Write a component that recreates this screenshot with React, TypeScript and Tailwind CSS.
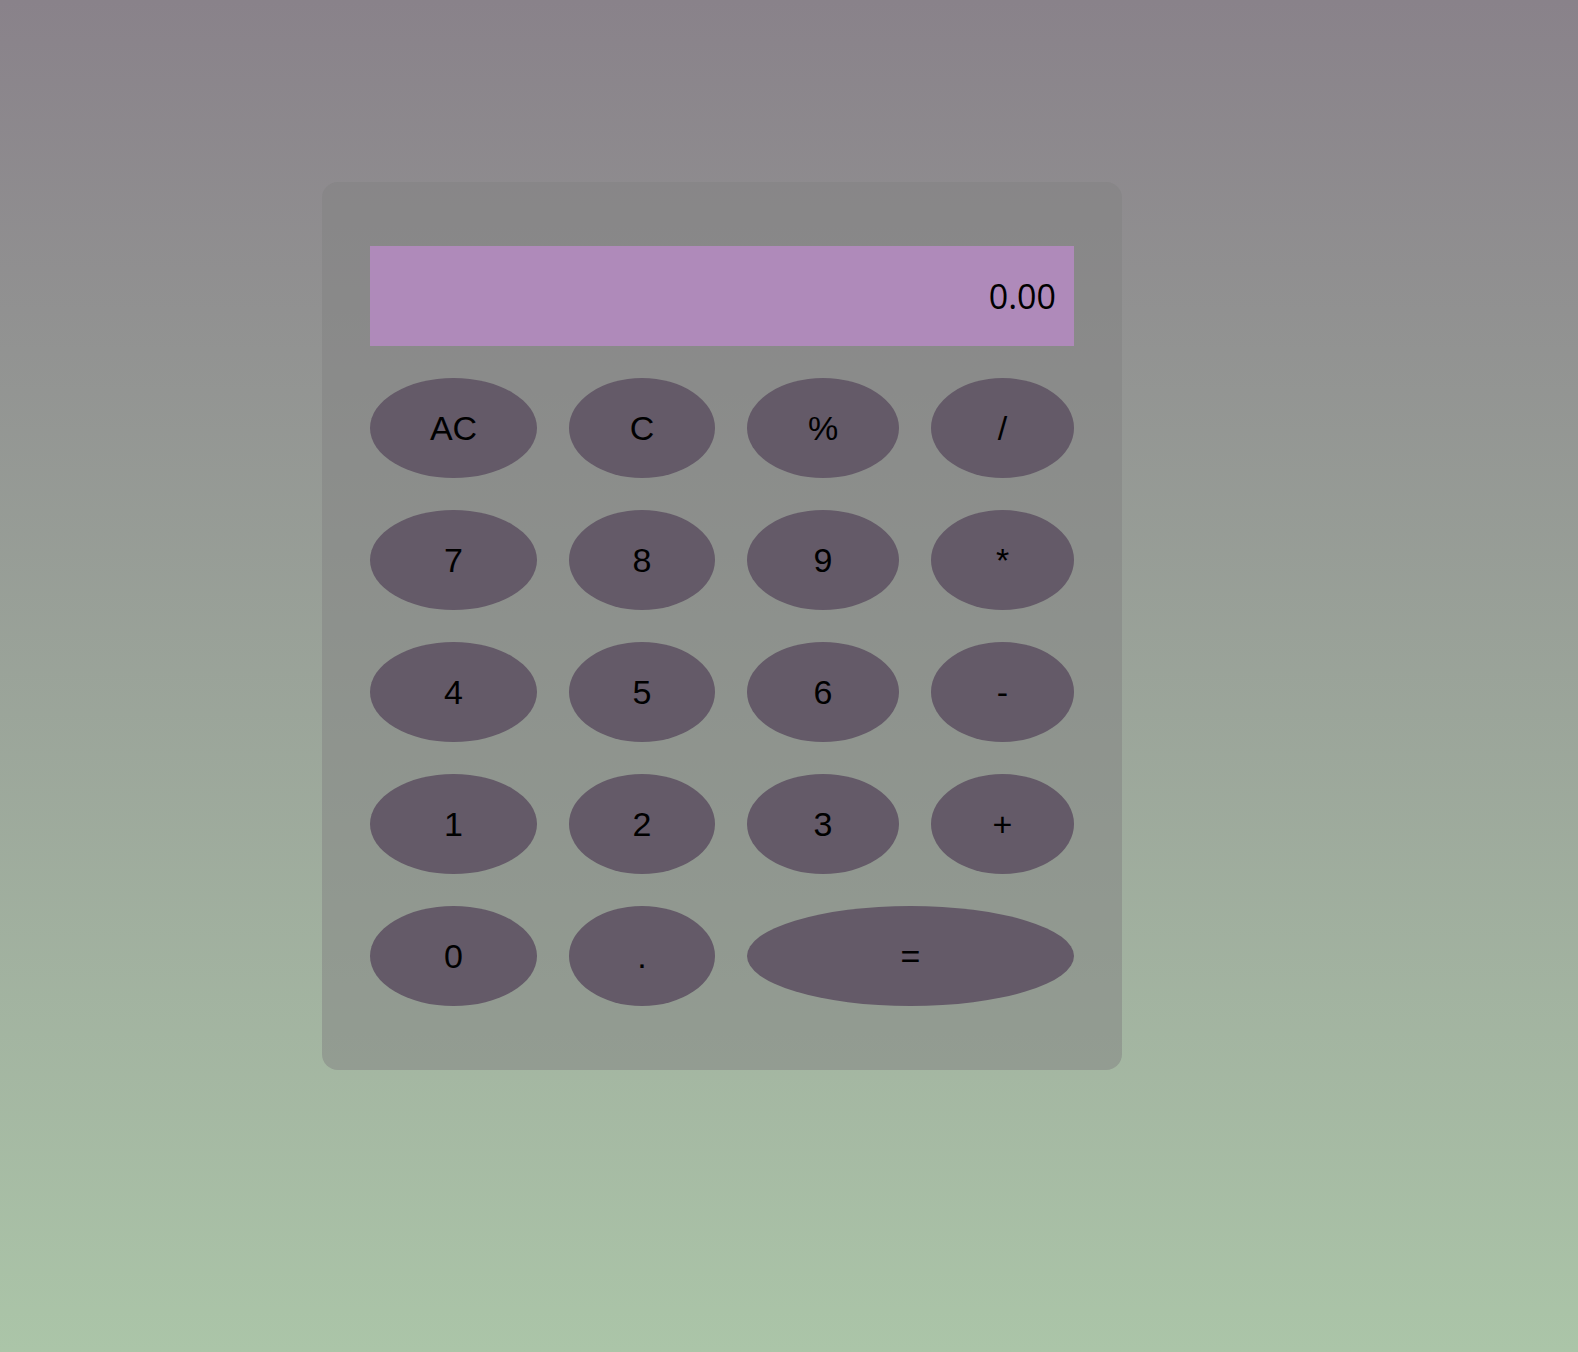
const keys: { label: string; span?: boolean }[] = [
  { label: "AC" },
  { label: "C" },
  { label: "%" },
  { label: "/" },
  { label: "7" },
  { label: "8" },
  { label: "9" },
  { label: "*" },
  { label: "4" },
  { label: "5" },
  { label: "6" },
  { label: "-" },
  { label: "1" },
  { label: "2" },
  { label: "3" },
  { label: "+" },
  { label: "0" },
  { label: "." },
  { label: "=", span: true },
];

export default function App() {
  return (
    <div className="min-h-[1352px] w-full bg-gradient-to-b from-[#89828a] to-[#abc5a8] pt-[182px] pl-[322px]">
      <div className="w-[800px] h-[888px] rounded-2xl bg-[rgba(130,130,130,0.5)] px-12 pt-16">
        <div className="h-[100px] w-[704px] bg-[#af8aba] flex items-center justify-end pr-[18px] text-[34px] text-black font-['Open_Sans',sans-serif]">
          0.00
        </div>
        <div className="mt-8 grid grid-cols-[167px_146px_152px_143px] gap-8">
          {keys.map((k) => (
            <button
              key={k.label}
              className={
                "h-[100px] rounded-[50%] bg-[#645a68] text-black text-[34px] font-['Liberation_Sans',Arial,sans-serif] flex items-center justify-center" +
                (k.span ? " col-span-2" : "")
              }
            >
              {k.label}
            </button>
          ))}
        </div>
      </div>
    </div>
  );
}
